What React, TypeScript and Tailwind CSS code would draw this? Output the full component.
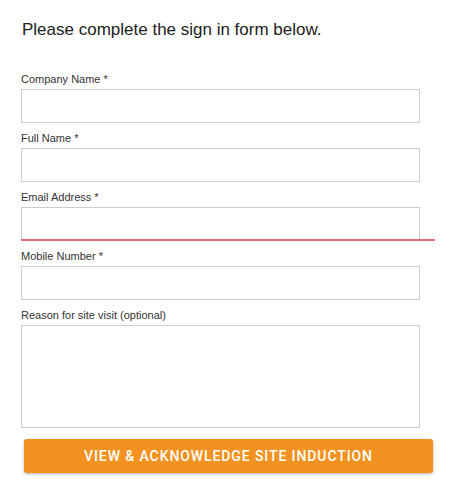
import React from "react";

const labelCls = "block text-[11px] leading-[14px] text-[#333333] mb-[3px]";
const inputCls = "block w-[399px] h-[34px] border border-[#cccccc] bg-white outline-none px-2 text-[13px]";

function Field({ label, children }: { label: string; children: React.ReactNode }) {
  return (
    <div className="mb-[8px]">
      <label className={labelCls}>{label}</label>
      {children}
    </div>
  );
}

export default function App() {
  return (
    <div className="w-[462px] h-[492px] bg-white pl-[21px] pt-[20px]" style={{ fontFamily: '"Liberation Sans", Arial, sans-serif' }}>
      <h1 className="ml-[1px] text-[17px] leading-[20px] text-[#222222] font-normal mb-[32px]">
        Please complete the sign in form below.
      </h1>
      <Field label="Company Name *">
        <input className={inputCls} />
      </Field>
      <Field label="Full Name *">
        <input className={inputCls} />
      </Field>
      <Field label="Email Address *">
        <div className="relative">
          <input className={inputCls} />
          <div className="absolute left-0 bottom-0 w-[414px] h-[2px] bg-[#e86a6a]" />
        </div>
      </Field>
      <Field label="Mobile Number *">
        <input className={inputCls} />
      </Field>
      <div>
        <label className={labelCls}>Reason for site visit (optional)</label>
        <textarea className="block w-[399px] h-[103px] border border-[#cccccc] bg-white outline-none p-2 text-[13px] resize-none" />
      </div>
      <button
        className="mt-[11px] ml-[3px] w-[409px] h-[34px] rounded-[3px] bg-[#f39220] text-white text-[14px] font-medium tracking-[0.9px] uppercase shadow-[0_1px_3px_rgba(0,0,0,0.3)] flex items-center justify-center"
        style={{ fontFamily: 'Roboto, "Liberation Sans", sans-serif' }}
      >
        View &amp; Acknowledge Site Induction
      </button>
    </div>
  );
}
